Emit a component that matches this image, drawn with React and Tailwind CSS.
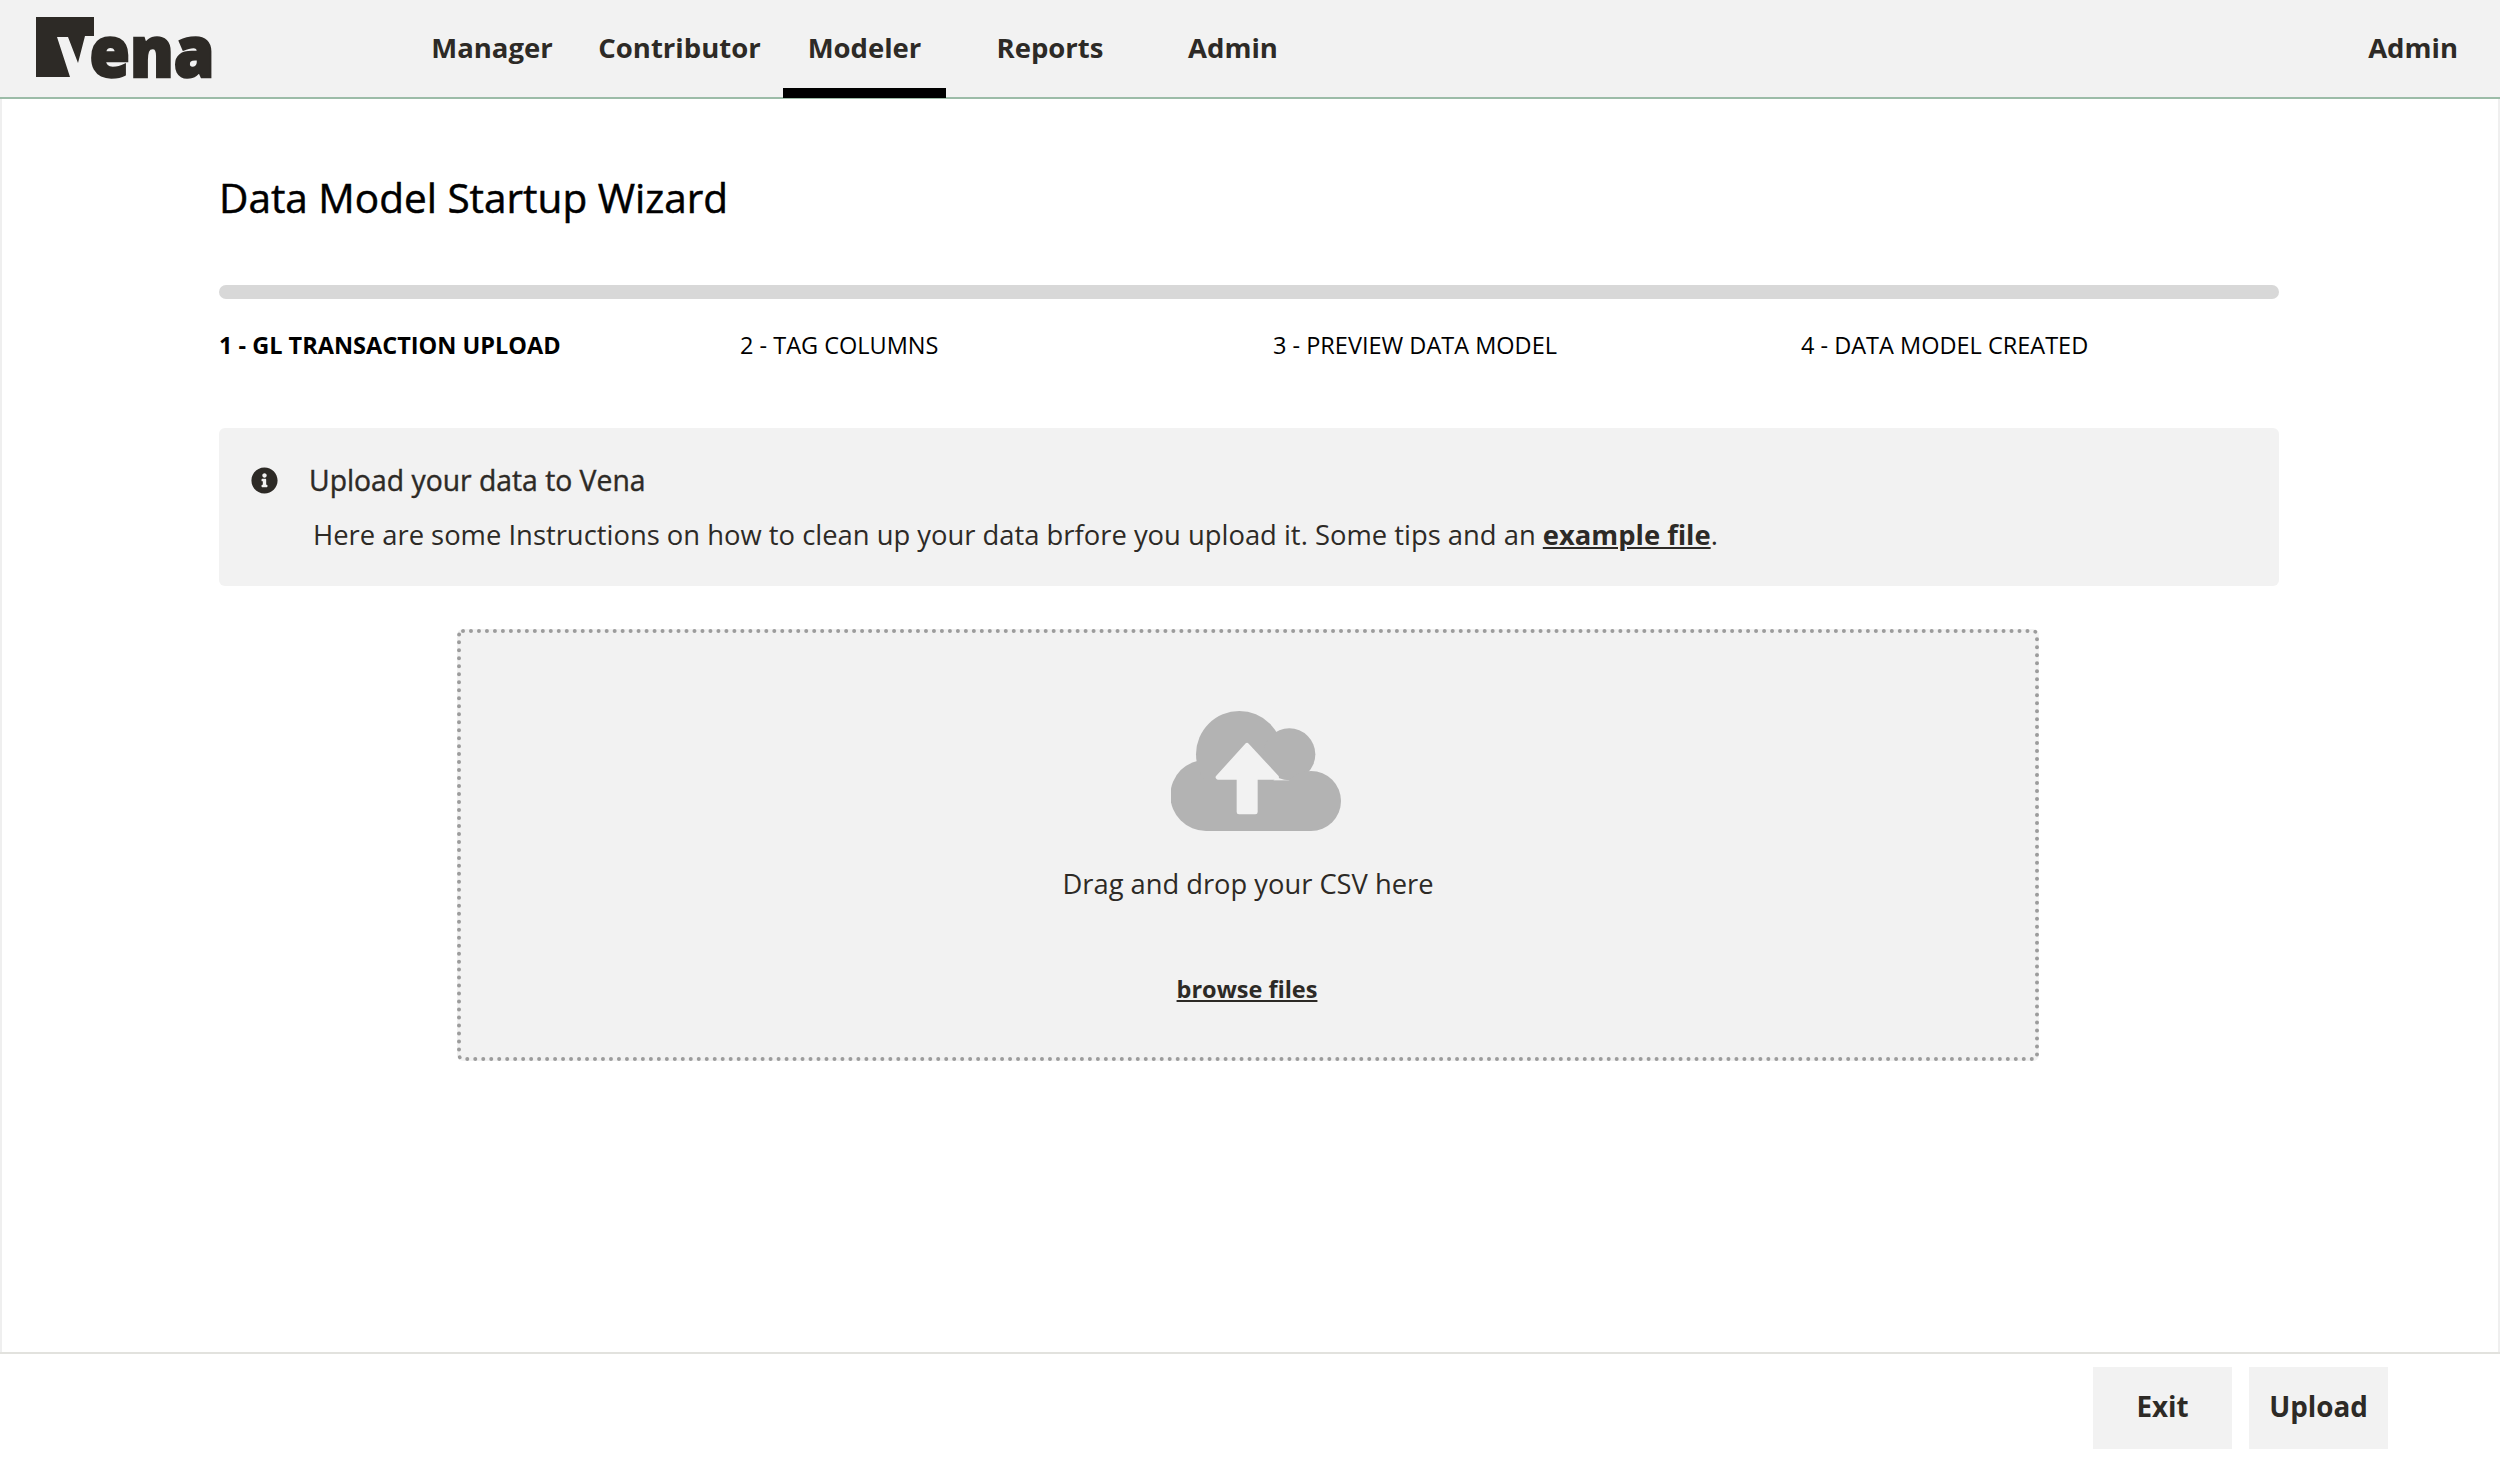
import React from "react";
import { FaInfoCircle } from "react-icons/fa";

const font = "font-['Open_Sans','Noto_Sans',sans-serif]";

function Logo() {
  return (
    <svg width="200" height="66" viewBox="34 16 200 66" className="block shrink-0 overflow-visible" aria-label="Vena">
      <path d="M35 18H93V37H84L77 64L67 38H56L69 78H35Z" fill="#2d2a26" />
      <text x="88.5" y="77.5" fill="#2d2a26" stroke="#2d2a26" strokeWidth="2.4" fontFamily="'Open Sans',sans-serif" fontWeight="800" fontSize="71" textLength="125" lengthAdjust="spacingAndGlyphs">ena</text>
    </svg>
  );
}

function Cloud() {
  return (
    <svg width="170" height="120" viewBox="215 92 510 360" className="block ml-[16px]">
      <g fill="#b3b3b3">
        <circle cx="320" cy="345" r="107" />
        <circle cx="420" cy="222" r="130" />
        <circle cx="570" cy="222" r="78" />
        <circle cx="635" cy="362" r="90" />
        <rect x="320" y="300" width="315" height="152" />
      </g>
      <path d="M443 195L356 291H419V395H468V291H532Z" fill="#f2f2f2" stroke="#f2f2f2" strokeWidth="14" strokeLinejoin="round" />
    </svg>
  );
}

function NavItem({ children, className = "", active }) {
  return (
    <div className={`relative flex h-full items-center justify-center pb-[1px] text-[27.5px] font-bold text-[#2d2a26] ${className}`}>
      {children}
      {active && <span className="absolute inset-x-0 bottom-[-1px] h-[10px] bg-black" />}
    </div>
  );
}

const Step = ({ children, className = "" }) => (
  <div className={`text-[23.5px] leading-8 text-black ${className}`}>{children}</div>
);

export default function App() {
  return (
    <div className={`${font} flex h-[1467px] w-[2500px] flex-col overflow-hidden bg-white text-[#2d2a26]`}>
      <header className="flex h-[99px] shrink-0 items-stretch border-b-2 border-b-[#9cbca8] bg-[#f2f2f2] pl-[35px] pr-[42px]">
        <div className="flex w-[396px] items-center pb-[1px]"><Logo /></div>
        <nav className="flex items-stretch">
          <NavItem className="w-[122px]">Manager</NavItem>
          <NavItem className="ml-[46px] w-[161px]">Contributor</NavItem>
          <NavItem className="ml-[23px] w-[163px]" active>Modeler</NavItem>
          <NavItem className="ml-[51px] w-[106px]">Reports</NavItem>
          <NavItem className="ml-[85px] w-[90px]">Admin</NavItem>
        </nav>
        <NavItem className="ml-auto">Admin</NavItem>
      </header>

      <main className="min-h-0 flex-1 border-x-2 border-x-[#efefef] pl-[217px] pr-[219px]">
        <h1 className="mt-[73px] text-[40.5px] font-normal leading-[52px] text-black [-webkit-text-stroke:0.5px_#000]">Data Model Startup Wizard</h1>
        <div className="mt-[61px] h-[14px] rounded-full bg-[#d8d8d8]" />
        <div className="mt-[30px] flex">
          <Step className="w-[521px] font-bold">1 - GL TRANSACTION UPLOAD</Step>
          <Step className="w-[533px]">2 - TAG COLUMNS</Step>
          <Step className="w-[528px]">3 - PREVIEW DATA MODEL</Step>
          <Step>4 - DATA MODEL CREATED</Step>
        </div>
        <section className="mt-[67px] h-[158px] rounded-md bg-[#f2f2f2] pl-[32px] pt-[32px]">
          <div className="flex items-center">
            <FaInfoCircle className="h-[27px] w-[27px] text-[#2d2a26]" />
            <span className="ml-[31px] text-[28.3px] font-normal leading-[40px] [-webkit-text-stroke:0.4px_#2d2a26]">Upload your data to Vena</span>
          </div>
          <p className="ml-[62px] mt-[15px] text-[27.38px] leading-[40px]">
            Here are some Instructions on how to clean up your data brfore you upload it. Some tips and an{" "}
            <a className="font-bold underline">example file</a>.
          </p>
        </section>
        <section className="ml-[238px] mt-[43px] flex h-[432px] w-[1582px] flex-col items-center rounded-md border-[4px] border-dotted border-[#9c9c9c] bg-[#f2f2f2] pt-[78px]">
          <Cloud />
          <div className="mt-[33px] text-[27.3px] leading-[40px]">Drag and drop your CSV here</div>
          <a className="mr-[2px] mt-[65px] text-[23.5px] font-bold leading-[40px] underline">browse files</a>
        </section>
      </main>

      <footer className="flex h-[115px] shrink-0 justify-end gap-[17px] border-t-2 border-t-[#e2e2de] pr-[112px] pt-[13px]">
        <button className="h-[82px] w-[139px] bg-[#f2f2f2] pb-[3px] text-[27.8px] font-bold">Exit</button>
        <button className="h-[82px] w-[139px] bg-[#f2f2f2] pb-[3px] text-[27.8px] font-bold">Upload</button>
      </footer>
    </div>
  );
}
